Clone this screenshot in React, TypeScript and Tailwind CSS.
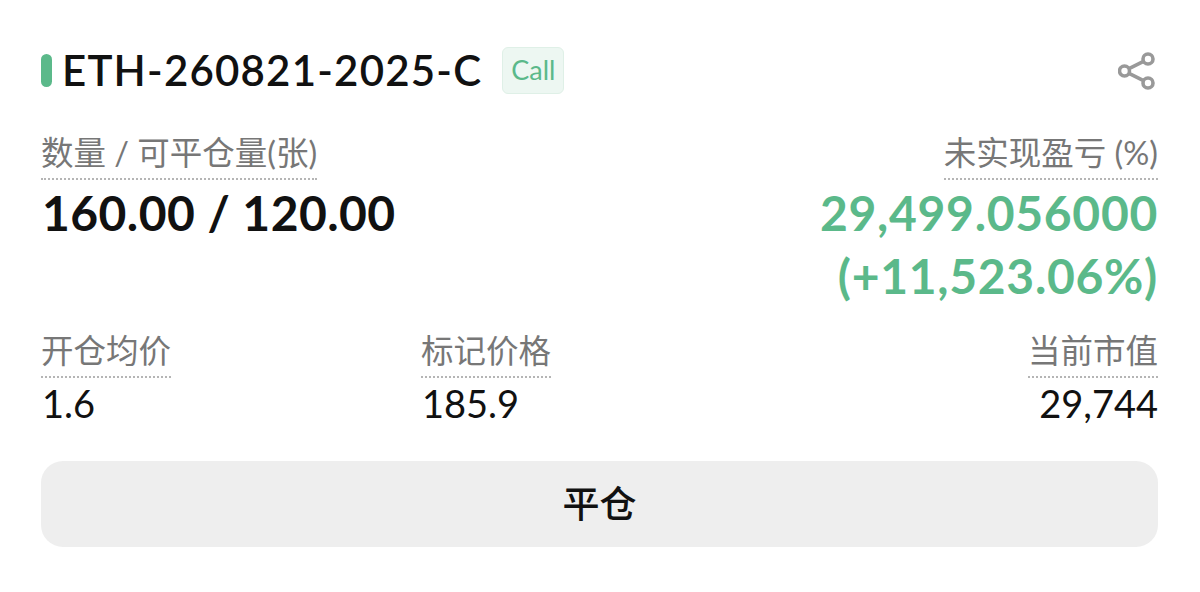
const FONT = "font-['Lato','Noto_Sans_CJK_SC',sans-serif]";

function Label({ children }: { children: React.ReactNode }) {
  return (
    <span className="inline-block h-[47px] border-b-2 border-dotted border-[#b5b5b5] text-[32.5px] leading-[40px] text-[#777777] whitespace-nowrap">
      {children}
    </span>
  );
}

function Metric({ label, value, right }: { label: string; value: string; right?: boolean }) {
  return (
    <div className={`flex flex-col ${right ? "items-end" : "items-start"}`}>
      <Label>{label}</Label>
      <span className={`mt-[1px] text-[38px] leading-[48px] text-[#111111] ${right ? "" : "pl-[1px]"}`}>{value}</span>
    </div>
  );
}

export default function App() {
  return (
    <div className={`${FONT} flex h-[592px] w-[1200px] flex-col overflow-hidden bg-white pl-[41px] pr-[42px] pt-[47px]`}>
      <div className="flex h-[47px] items-center">
        <span className="h-[33px] w-[11px] rounded-full bg-[#5bb98a]" />
        <span className="ml-[10px] text-[42px] font-semibold leading-[47px] tracking-[1.2px] text-[#111111] whitespace-nowrap">ETH-260821-2025-C</span>
        <span className="ml-[20px] flex h-[47px] w-[62px] items-center justify-center rounded-[6px] border border-[#dff0e7] bg-[#edf7f2] text-[27px] text-[#5bb98a]">Call</span>
        <svg className="ml-auto mr-[2px]" width="38" height="38" viewBox="0 0 38 38" fill="none" stroke="#999999" strokeWidth="3.6">
          <circle cx="6.5" cy="19" r="5" />
          <circle cx="30" cy="7" r="5" />
          <circle cx="30" cy="31" r="5" />
          <path d="M11 16.7 L25.5 9.3 M11 21.3 L25.5 28.7" />
        </svg>
      </div>

      <div className="mt-[39px] flex items-start justify-between">
        <div className="flex flex-col items-start">
          <Label>数量 / 可平仓量(张)</Label>
          <span className="mt-[3px] pl-[1px] text-[48px] font-bold leading-[60px] tracking-[0.45px] text-[#111111]">160.00 / 120.00</span>
        </div>
        <div className="flex flex-col items-end">
          <Label>未实现盈亏 (%)</Label>
          <span className="mt-[3px] text-[48px] font-bold leading-[60px] tracking-[0.7px] text-[#5bb98a]">29,499.056000</span>
          <span className="mt-[3px] text-[48px] font-bold leading-[60px] tracking-[0.7px] text-[#5bb98a]">(+11,523.06%)</span>
        </div>
      </div>

      <div className="mt-[25px] grid grid-cols-[380px_1fr_auto]">
        <Metric label="开仓均价" value="1.6" />
        <Metric label="标记价格" value="185.9" />
        <Metric label="当前市值" value="29,744" right />
      </div>

      <button className="mt-[34px] flex h-[86px] items-center justify-center rounded-[22px] bg-[#eeeeee] text-[37px] font-medium text-[#111111]">
        平仓
      </button>
    </div>
  );
}
